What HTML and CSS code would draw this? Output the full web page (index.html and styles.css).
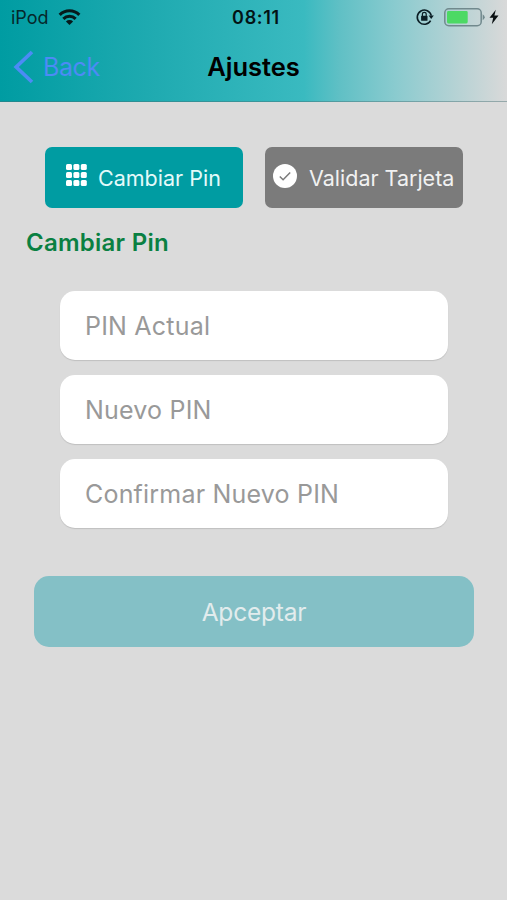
FILE: index.html
```html
<!DOCTYPE html>
<html lang="es">
<head>
<meta charset="utf-8">
<title>Ajustes</title>
<link rel="stylesheet" href="styles.css">
</head>
<body>
<header class="header">
  <div class="status">
    <div class="status-left">
      <span class="carrier">iPod</span>
      <svg class="wifi" width="23" height="17" viewBox="0 0 24 18"><g fill="none" stroke="#061a1c" stroke-width="3.2"><path d="M1.6 6.2a14.5 14.5 0 0 1 20.8 0"/><path d="M5.5 10.4a9.2 9.2 0 0 1 13 0"/></g><path d="M8.2 13.2a5.4 5.4 0 0 1 7.6 0L12 17z" fill="#061a1c"/></svg>
    </div>
    <span class="clock">08:11</span>
    <div class="status-right">
      <svg width="18" height="18" viewBox="0 0 18 18"><path d="M14.6 12.6A7.1 7.1 0 1 1 15.3 7.6" fill="none" stroke="#0b1e25" stroke-width="1.6"/><path d="M12.6 7.6h5.2l-2.6 3.5z" fill="#0b1e25"/><rect x="5.1" y="7.8" width="6.4" height="5" rx=".6" fill="#0b1e25"/><path d="M6.4 8V6.3a1.9 1.9 0 0 1 3.8 0V8" fill="none" stroke="#0b1e25" stroke-width="1.2"/></svg>
      <svg class="battery" width="42" height="19" viewBox="0 0 42 19"><rect x=".8" y=".8" width="36.4" height="16.9" rx="4" fill="none" stroke="#71898d" stroke-width="1.5"/><rect x="3" y="3" width="20.7" height="12.4" rx="1.4" fill="#4cd964"/><path d="M38.7 6.2q4 3 0 6z" fill="#71898d"/></svg>
      <svg class="bolt" width="10" height="16" viewBox="0 0 10 16"><path d="M6.8.8.5 8.8h3.7L2.8 15.2 9.5 6.6H5.4z" fill="#0a1012"/></svg>
    </div>
  </div>
  <nav class="nav">
    <a class="back"><svg width="21" height="34" viewBox="0 0 21 34"><path d="M19 2 3.2 17 19 32" fill="none" stroke="#4c8bf5" stroke-width="3.7"/></svg><span>Back</span></a>
    <h1 class="title">Ajustes</h1>
  </nav>
</header>
<main class="content">
  <div class="tabs">
    <button class="tab tab-active"><svg width="21" height="23" viewBox="0 0 21 23" fill="#fff"><rect x="0" y="0" width="6" height="6" rx="1.5"/><rect x="7.4" y="0" width="6" height="6" rx="1.5"/><rect x="14.8" y="0" width="6" height="6" rx="1.5"/><rect x="0" y="8" width="6" height="6" rx="1.5"/><rect x="7.4" y="8" width="6" height="6" rx="1.5"/><rect x="14.8" y="8" width="6" height="6" rx="1.5"/><rect x="0" y="16" width="6" height="6" rx="1.5"/><rect x="7.4" y="16" width="6" height="6" rx="1.5"/><rect x="14.8" y="16" width="6" height="6" rx="1.5"/></svg><span>Cambiar Pin</span></button>
    <button class="tab tab-muted"><svg width="24" height="24" viewBox="0 0 24 24"><circle cx="12" cy="12" r="12" fill="#fff"/><path d="m6.8 12.5 3.3 3.3 7.1-7.3" fill="none" stroke="#7b7b7b" stroke-width="1.5"/></svg><span>Validar Tarjeta</span></button>
  </div>
  <h2 class="heading">Cambiar Pin</h2>
  <form class="form">
    <label class="field"><span>PIN Actual</span></label>
    <label class="field"><span>Nuevo PIN</span></label>
    <label class="field"><span>Confirmar Nuevo PIN</span></label>
  </form>
  <button class="submit"><span>Apceptar</span></button>
</main>
</body>
</html>
```
FILE: styles.css
```css
* { box-sizing: border-box; }
body {
  margin: 0;
  height: 900px;
  overflow: hidden;
  background: #dbdbdb;
  font-family: Inter, "Liberation Sans", sans-serif;
  color: #000;
}
button { border: 0; padding: 0; font: inherit; }
svg { display: block; flex: none; }
span { white-space: nowrap; }
.header {
  height: 102px;
  border-bottom: 1px solid rgba(70, 110, 115, .45);
  background: linear-gradient(90deg, #009ca2 0%, #20abb1 31%, #3abac0 60%, #60c0c5 67%, #8acbcf 78%, #b9d3d5 91%, #d9d9d9 100%);
}
.status {
  height: 34px;
  display: grid;
  grid-template-columns: 1fr auto 1fr;
  align-items: center;
  padding: 0 8px 0 11px;
}
.status-left, .status-right { display: flex; align-items: center; }
.status-right { justify-content: flex-end; }
.carrier { font-size: 18px; color: #06282b; }
.wifi { margin-left: 9px; }
.clock { margin-left: 2px; font-size: 18px; font-weight: 600; letter-spacing: .7px; color: #031315; }
.battery { margin-left: 10px; }
.bolt { margin-left: 3px; }
.nav {
  height: 66px;
  display: grid;
  grid-template-columns: 1fr auto 1fr;
  align-items: center;
  padding-left: 13px;
  padding-right: 13px;
}
.back { display: flex; align-items: center; gap: 9px; color: #4c8bf5; font-size: 25px; letter-spacing: -.4px; }
.title { margin: 0; font-size: 25.5px; line-height: 30px; font-weight: 600; }
.content { display: flex; flex-direction: column; }
.tabs { display: flex; gap: 22px; padding: 45px 44px 0 45px; }
.tab {
  width: 198px;
  height: 61px;
  border-radius: 7px;
  display: flex;
  align-items: center;
  font-size: 21.5px;
  color: #fff;
}
.tab svg { margin-bottom: 4px; }
.tab-active { background: #009ca2; padding-left: 21px; gap: 11px; color: #e4fafa; }
.tab-muted { background: #7b7b7b; padding-left: 8px; gap: 12px; color: #f1f1f1; }
.heading { margin: 20px 0 0 26px; font-size: 24px; line-height: 30px; font-weight: 600; letter-spacing: .25px; color: #0a8042; }
.form { margin: 33px 59px 0 60px; display: flex; flex-direction: column; gap: 15px; }
.field {
  height: 69px;
  border-radius: 15px;
  background: #fff;
  box-shadow: 0 1px 1px rgba(0, 0, 0, .13);
  display: flex;
  align-items: center;
  padding-left: 25px;
  font-size: 25px;
  letter-spacing: .2px;
  color: #999;
}
.submit {
  margin: 48px 33px 0 34px;
  height: 71px;
  border-radius: 15px;
  background: #84c0c6;
  color: #e2eced;
  font-size: 24.5px;
  letter-spacing: -.2px;
}
```
